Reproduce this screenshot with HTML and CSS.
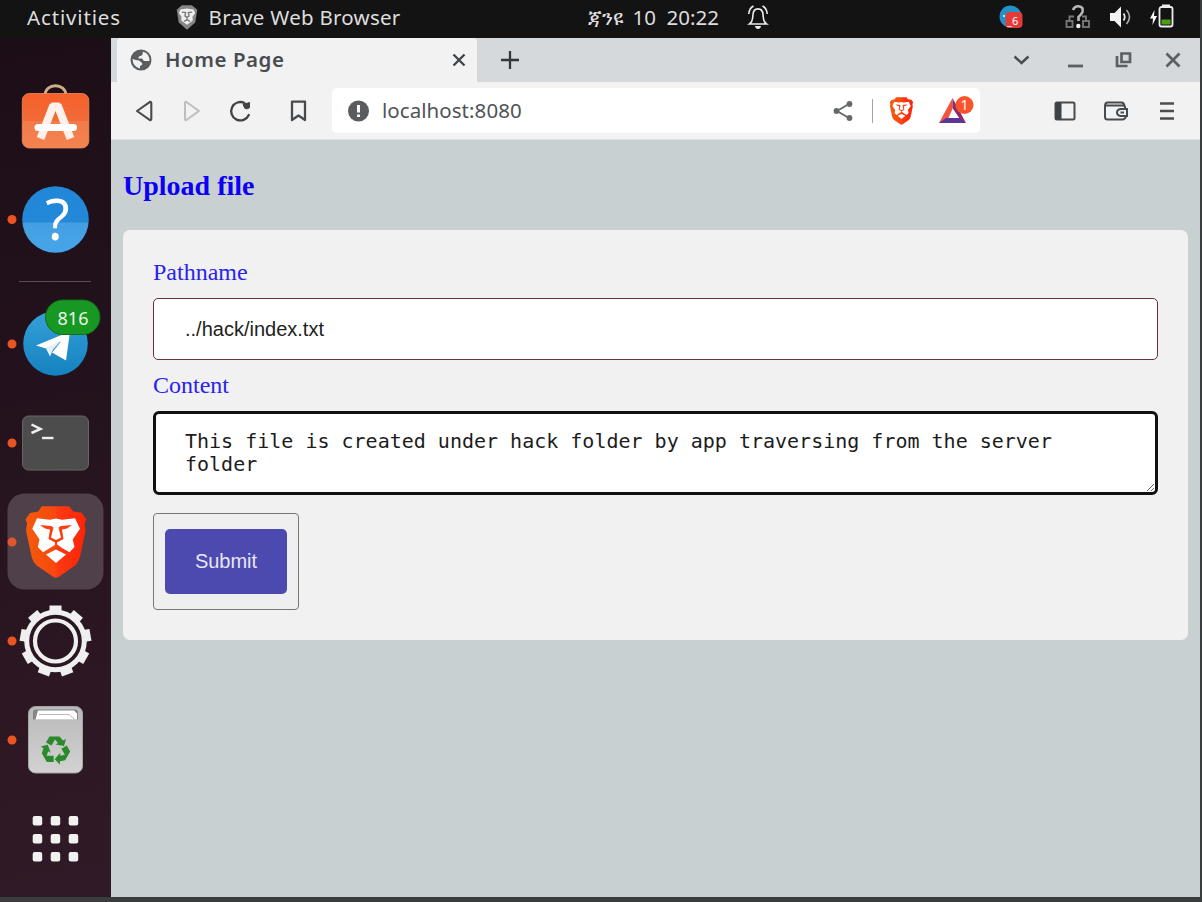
FILE: index.html
```html
<!DOCTYPE html>
<html lang="en">
<head>
<meta charset="utf-8">
<title>Home Page</title>
<link rel="stylesheet" href="styles.css">
</head>
<body>
<svg class="defs" width="0" height="0">
  <defs>
    <linearGradient id="gBag" x1="0" y1="0" x2="0" y2="1"><stop offset="0" stop-color="#f4602a"/><stop offset=".5" stop-color="#f26b38"/><stop offset=".51" stop-color="#f37b4a"/><stop offset="1" stop-color="#f3834f"/></linearGradient>
    <linearGradient id="gHelp" x1="0" y1="0" x2="0" y2="1"><stop offset="0" stop-color="#2187d8"/><stop offset=".54" stop-color="#2388d8"/><stop offset=".55" stop-color="#449fe2"/><stop offset="1" stop-color="#45a5e8"/></linearGradient>
    <linearGradient id="gTele" x1="0" y1="0" x2="0" y2="1"><stop offset="0" stop-color="#36a0d8"/><stop offset="1" stop-color="#1482c0"/></linearGradient>
    <linearGradient id="gLion" x1="0" y1="0" x2="1" y2="0"><stop offset="0" stop-color="#f35b0c"/><stop offset=".5" stop-color="#f9470f"/><stop offset=".52" stop-color="#fb3a12"/><stop offset="1" stop-color="#fb2406"/></linearGradient>
    <linearGradient id="gBin" x1="0" y1="0" x2="0" y2="1"><stop offset="0" stop-color="#b9b9b9"/><stop offset="1" stop-color="#d2d2d2"/></linearGradient>
    <symbol id="lion" viewBox="-1 0 62 73">
      <path class="mane" d="M15.700.7H43L47.300 6 55.700 7.300 60.500 14 58.500 18 59.500 25 54 51.500Q52.500 57 49 60L34 70.500Q30 74 26 70.500L10.700 60Q7 57 5.700 51.700L0 25 1 18-.5 14 4 7.500 12.300 6Z"/>
      <path fill="#fff" d="M11 12.700 24 14.300 30 13 36 14.300 49 12.700 54 23.300 46.700 34 48.500 41.500 43.500 46.700 36 42.500 30.500 38.500 24 42.500 17 46.700 11.800 41.500 13.500 34 6.300 23.300Z"/>
      <path fill="#fff" d="M20 49 30 44 40 49 30 57.500Z"/>
      <path class="brow" d="M14 19.500 25 20.500 27.500 22 25 32 30 34.500 35 32 32.500 22 35 20.500 46 19.500 41 23 36 24 37.500 33.500 31 37V41H29V37L22.500 33.500 24 24 19 23Z"/>
    </symbol>
  </defs>
</svg>

<div class="desktop">
  <header class="topbar">
    <span class="activities">Activities</span>
    <svg class="app-icon" width="22" height="25" viewBox="-1 0 62 73"><path fill="#858585" d="M15 1H44L60 14 54 51 30 72 6 51 0 14Z"/><path fill="#eee" d="M11 13 30 10 49 13 54 23 46 34 47 45 30 58 13 45 14 34 6 23Z"/><path fill="none" stroke="#777" stroke-width="4" d="M15 21 26 22 24 32 30 36 36 32 34 22 45 21M30 36V43L21 48M30 43 39 48"/></svg>
    <span class="app-name">Brave Web Browser</span>
    <span class="clock"><span class="month">ጃንዩ</span><span class="day">10</span><span>20:22</span></span>
    <svg class="bell" width="22" height="26" viewBox="0 0 22 26" fill="none" stroke="#ededed" stroke-width="1.600"><path d="M2.500 20C6 17.500 5.500 15 6 10.500 6.500 3 15.500 3 16 10.500 16.500 15 16 17.500 19.500 20ZM1.800 10Q2.300 4 6.500 2M20.200 10Q19.700 4 15.500 2"/><path d="M8 22H14Q13.500 25 11 25T8 22Z" fill="#ededed" stroke="none"/></svg>
    <svg class="tray-telegram" width="24" height="24" viewBox="0 0 24 24"><circle cx="11.500" cy="11.500" r="11" fill="#2491c8"/><circle cx="5" cy="11" r="1" fill="#fff"/><rect x="6.500" y="7" width="17" height="16" rx="4" fill="#e33c38"/><text x="8" y="20" class="tray-count">_6</text></svg>
    <svg class="network" width="26" height="26" viewBox="0 0 26 26"><g fill="none" stroke="#777" stroke-width="1.900"><rect x="1.500" y="17" width="6" height="6"/><rect x="18" y="17" width="6" height="6"/><path d="M4.500 17V12.500H9M17 12.500H21V17"/></g><path d="M8 6Q9.500 2 13.500 2.200 19 3 17.500 8 16 11 13.500 13V17" fill="none" stroke="#b9b9b9" stroke-width="2.600"/><circle cx="13.300" cy="22" r="2.200" fill="#eee"/></svg>
    <svg class="volume" width="24" height="24" viewBox="0 0 24 24"><path d="M1 8H5.500L12 1.500V22.500L5.500 16H1Z" fill="#f2f2f2"/><path d="M14.500 8.500Q17 12 14.500 15.500" fill="none" stroke="#eee" stroke-width="1.700"/><path d="M17.500 5Q23.500 12 17.500 19" fill="none" stroke="#aaa" stroke-width="1.600"/></svg>
    <svg class="battery" width="26" height="26" viewBox="0 0 26 26"><path d="M5.500 6 1 14.500H4L3.500 21 8 12H5Z" fill="#fff"/><path d="M14 3V1.500H20V3" fill="none" stroke="#eee" stroke-width="2"/><rect x="10.500" y="3" width="13" height="19.500" rx="2" fill="none" stroke="#eee" stroke-width="1.800"/><rect x="12.500" y="15.500" width="9" height="5" fill="#4da012"/></svg>
  </header>

  <div class="workspace">
    <nav class="dock">
      <svg class="dock-item" viewBox="0 -49.500 111 99"><path d="M45-25C45-38 66-38 66-25" fill="none" stroke="#cdb089" stroke-width="2.800"/><rect x="22.300" y="-27" width="66.500" height="54.500" rx="7" fill="url(#gBag)" stroke="#f58a5c" stroke-width=".8"/><g stroke="#fff0ea" fill="none"><path stroke-width="8" d="M40.500 18 53.500-15.500M70.500 18 57.500-15.500"/><path stroke="#fff" stroke-width="7" stroke-linecap="round" d="M38 7H73.500"/></g><path fill="#fff0ea" d="M49.800-14 51.500-18H59.500L61.200-14Z"/></svg>
      <svg class="dock-item" viewBox="0 -49.500 111 99"><circle cx="12" cy="0" r="4.500" fill="#e95420"/><circle cx="55.500" cy="0" r="33.300" fill="url(#gHelp)"/><text class="help-mark" x="57.500" y="20.500" text-anchor="middle">?</text></svg>
      <div class="dock-divider"></div>
      <svg class="dock-item" viewBox="0 -49.500 111 99"><circle cx="12" cy=".5" r="4.500" fill="#e95420"/><circle cx="55.500" cy="0" r="32.300" fill="url(#gTele)"/><path fill="#fff" d="M36 2 70-12 66 17 52 9 61-2 46 5Z"/><path fill="#e8f1f6" d="M46 5 62-4 53 6 50 13Z"/><rect x="45.500" y="-43.500" width="54.500" height="34.500" rx="17.200" fill="#179823" stroke="#126c1b"/><text class="badge" x="73" y="-19" text-anchor="middle">816</text></svg>
      <svg class="dock-item" viewBox="0 -49.500 111 99"><circle cx="12" cy=".5" r="4.500" fill="#e95420"/><rect x="22.500" y="-26.500" width="66" height="54" rx="6" fill="#4c4c4c" stroke="#666"/><path d="M31.500-18 40.500-13.500 31.500-9.500" fill="none" stroke="#eee" stroke-width="2.500"/><path d="M42-4.500H53.500" stroke="#eee" stroke-width="2.400"/></svg>
      <svg class="dock-item lion-color" viewBox="0 -49.500 111 99"><rect x="7.500" y="-48" width="96" height="96" rx="17" fill="#4f404a"/><circle cx="12" cy=".5" r="4.500" fill="#e0552b"/><use href="#lion" x="25" y="-36" width="62" height="73"/></svg>
      <svg class="dock-item" viewBox="0 -49.500 111 99"><circle cx="12" cy=".5" r="4.500" fill="#e95420"/><g transform="translate(55.500 .5)" fill="none" stroke="#efefef"><circle r="28.800" stroke-width="5"/><circle r="20.500" stroke-width="4.200"/><g fill="#efefef" stroke="none"><path id="tooth" d="M-6-29-6-35.500H6L6-29Z"/><use href="#tooth" transform="rotate(40)"/><use href="#tooth" transform="rotate(80)"/><use href="#tooth" transform="rotate(120)"/><use href="#tooth" transform="rotate(160)"/><use href="#tooth" transform="rotate(200)"/><use href="#tooth" transform="rotate(240)"/><use href="#tooth" transform="rotate(280)"/><use href="#tooth" transform="rotate(320)"/></g></g></svg>
      <svg class="dock-item" viewBox="0 -49.500 111 99"><circle cx="12" cy=".5" r="4.500" fill="#e95420"/><rect x="28.500" y="-33" width="54" height="66.500" rx="7" fill="url(#gBin)" stroke="#a5a5a5"/><path d="M33-20V-28Q33-30 36-30H75Q78-30 78-27V-20Z" fill="#858585"/><path d="M35.500-20 38-29H74L77-26V-20Z" fill="#fff"/><path d="M39-25H69L75-20" fill="none" stroke="#bbb"/>
        <g transform="translate(55.500 10.500)" fill="#2a8a2b"><path id="arrow" d="M-9.500-7.500-6-13.500H4L7.500-9.500 10.500-11 8.500-4 0-5.500 2.500-7-.5-10.500-4-4.500Z"/><use href="#arrow" transform="rotate(120)"/><use href="#arrow" transform="rotate(240)"/></g></svg>
      <svg class="dock-item" viewBox="0 -49.500 111 99" fill="#f1f1f1"><g id="dots"><rect x="32.700" y="-22.500" width="9.500" height="9.500" rx="2"/><rect x="50.700" y="-22.500" width="9.500" height="9.500" rx="2"/><rect x="68.700" y="-22.500" width="9.500" height="9.500" rx="2"/></g><use href="#dots" y="18"/><use href="#dots" y="36"/></svg>
    </nav>

    <main class="window">
      <div class="tabstrip">
        <div class="tab">
          <svg width="22" height="22" viewBox="0 0 22 22"><circle cx="11" cy="11" r="10.500" fill="#5b5e61"/><path fill="#f2f2f2" d="M2.500 10Q6 11 9 11.500L12 14Q13 16 10 17V19.500Q3 18 2.500 10ZM10 2.500 13 3Q13 6 10.500 7 8 7.500 8.500 9.500L12 9.500 14 12H19.500Q19.500 5 14 3Z"/></svg>
          <span class="tab-title">Home Page</span>
          <svg width="16" height="16" viewBox="0 0 16 16"><path d="M2.500 2.500 13.500 13.500M13.500 2.500 2.500 13.500" stroke="#404447" stroke-width="2.300"/></svg>
        </div>
        <svg class="new-tab" width="22" height="22" viewBox="0 0 22 22"><path d="M11 2V20M2 11H20" stroke="#33373a" stroke-width="2.300"/></svg>
        <div class="window-controls">
          <svg width="20" height="20" viewBox="0 0 20 20"><path d="M3.500 6.500 10.500 13 17.500 6.500" fill="none" stroke="#4a4e51" stroke-width="2.500"/></svg>
          <svg width="20" height="20" viewBox="0 0 20 20"><path d="M3 16H18" stroke="#5c6063" stroke-width="2.800"/></svg>
          <svg width="20" height="20" viewBox="0 0 20 20" fill="none" stroke="#5c6063" stroke-width="2.700"><path d="M8.500 3.500H17V12H8.500ZM4 6V16H14.500"/></svg>
          <svg width="20" height="20" viewBox="0 0 20 20"><path d="M3.500 3.500 16.500 16.500M16.500 3.500 3.500 16.500" stroke="#5c6063" stroke-width="2.800"/></svg>
        </div>
      </div>

      <div class="toolbar">
        <svg class="nav-button" viewBox="-24 -12 48 24"><path d="M-7 0 6-9.200Q7.300-9.500 7.300-7.500V7.500Q7.300 9.500 6 9.200Z" fill="none" stroke="#484b4e" stroke-width="2.100" stroke-linejoin="round"/></svg>
        <svg class="nav-button" viewBox="-24 -12 48 24"><path d="M7 0-6-9.200Q-7-9.500-7-7.500V7.500Q-7 9.500-6 9.200Z" fill="none" stroke="#bebebe" stroke-width="2" stroke-linejoin="round"/></svg>
        <svg class="nav-button" viewBox="-24 -12 48 24"><path d="M4.500-8A9.200 9.200 0 1 0 8.800 4" fill="none" stroke="#404346" stroke-width="2.300" stroke-linecap="round"/><path d="M3-6.500 9.500-8.500V-3.500Q8-1.500 5-2.500Z" fill="#404346" stroke="#404346" stroke-linejoin="round"/></svg>
        <svg class="nav-button bookmark" viewBox="-34 -12 68 24"><path d="M-6-9.300H7V9L.5 4.500-6 9Z" fill="none" stroke="#484b4e" stroke-width="2.300" stroke-linejoin="round"/></svg>
        <div class="address">
          <svg class="info" width="22" height="22" viewBox="0 0 22 22"><circle cx="11.500" cy="11" r="10.500" fill="#5a5d60"/><path d="M11.500 5V12.500M11.500 14.500V17" stroke="#fff" stroke-width="3"/></svg>
          <span class="url">localhost:8080</span>
          <svg class="share" viewBox="-24 -12 48 24"><path d="M6-7-6 0 6 7" fill="none" stroke="#66696c" stroke-width="1.900"/><g fill="#66696c"><circle cx="6.500" cy="-7" r="2.900"/><circle cx="-6.500" cy="0" r="2.900"/><circle cx="6.500" cy="7" r="2.900"/></g></svg>
          <span class="separator"></span>
          <svg class="shields" viewBox="-24 -15 48 30"><use href="#lion" x="-12" y="-14" width="25" height="28"/></svg>
          <svg class="rewards" viewBox="925 93 55 36"><path d="M952.500 98 939 123H946L952.500 109Z" fill="#f0543c"/><path d="M939 123H966L961 118H946Z" fill="#5c3596"/><path d="M952.500 98 966 123 959.500 118.500 952.500 108Z" fill="#8c2c6e"/><circle cx="964.500" cy="105" r="9" fill="#fb542b"/><text x="964.500" y="110" text-anchor="middle">1</text></svg>
        </div>
        <div class="tools">
          <svg viewBox="-25.500 -12 51 24"><rect x="-9" y="-8.500" width="19" height="17" rx="1.500" fill="none" stroke="#484b4e" stroke-width="2"/><rect x="-9" y="-8.500" width="6" height="17" fill="#3f4245"/></svg>
          <svg viewBox="-25.500 -12 51 24" fill="none" stroke="#484b4e" stroke-width="2"><path d="M9.500-3V-4Q9.500-5.500 7.500-5.500H-10M-10.500-5V6Q-10.500 8.500-8 8.500H7Q9.500 8.500 10.500 5.500M-10.500-5Q-10.500-8.500-8-8.500H6Q8.500-8.500 9-5"/><path d="M11.500-2H5Q1.500-1.500 1.500 1.500T5 5H11.500Z"/><path d="M5 1.500H8.500"/></svg>
          <svg viewBox="-25.500 -12 51 24"><path d="M-6.500-7.500H7.500M-6.500 0H7.500M-6.500 7.500H7.500" stroke="#4b4e51" stroke-width="2.400"/></svg>
        </div>
      </div>

      <section class="page">
        <h2>Upload file</h2>
        <form class="card">
          <label for="path">Pathname</label>
          <input id="path" type="text" value="../hack/index.txt">
          <label for="content">Content</label>
          <textarea id="content" spellcheck="false">This file is created under hack folder by app traversing from the server folder</textarea>
          <div class="submit-frame"><button type="button">Submit</button></div>
        </form>
      </section>
    </main>
  </div>
</div>
</body>
</html>
```

FILE: styles.css
```css
* { box-sizing: border-box; }

body {
  margin: 0;
  background: #393d3e;
  font-family: "Noto Sans", "Open Sans", sans-serif;
}

.defs { display: block; }

svg { flex: none; display: block; }

.desktop {
  width: 1202px;
  height: 902px;
  padding: 0 2px 5px 0;
  display: flex;
  flex-direction: column;
  overflow: hidden;
}

/* Top panel */
.topbar {
  height: 37.500px;
  flex: none;
  display: flex;
  align-items: center;
  padding: 0 25px 3px 27px;
  background: #131313;
  color: #dedede;
  font-size: 20.500px;
  white-space: nowrap;
}
.activities { width: 149px; letter-spacing: 0.850px; }
.app-icon { width: 22px; }
.app-name { width: 380px; padding-left: 11px; letter-spacing: 0.250px; }
.clock { width: 171px; padding-left: 12px; display: flex; align-items: baseline; }
.month { width: 44px; font-size: 21px; }
.day { width: 34px; }
.bell { margin-right: 230px; }
.network { margin-left: 42px; }
.volume { margin-left: 18px; }
.battery { margin-left: 16px; }
.tray-count { font-size: 11px; fill: #fff; }

/* Dock */
.workspace { flex: 1; display: flex; min-height: 0; }
.dock {
  width: 111px;
  flex: none;
  padding-top: 33.500px;
  background: linear-gradient(170deg, #1c0e17 0%, #23121d 40%, #2c1723 75%, #301a27 100%);
}
.dock-item { width: 111px; height: 99px; }
.dock-divider {
  width: 72px;
  height: 1px;
  margin: 12px 0 12px 19px;
  background: #5a4e56;
}
.help-mark { font-size: 56px; fill: #fff; }
.badge { font-size: 18px; fill: #e9f5ea; }
.mane { fill: url(#gLion); }
.brow { fill: #fa4011; }

/* Browser window */
.window {
  flex: 1;
  display: flex;
  flex-direction: column;
  min-width: 0;
  background: #c8d0d2;
}
.tabstrip {
  height: 44.500px;
  flex: none;
  display: flex;
  align-items: center;
  padding-left: 6px;
  background: #d5d9dc;
}
.tab {
  width: 360px;
  height: 44.500px;
  display: flex;
  align-items: center;
  padding: 0 10px 0 13px;
  border-radius: 4px 4px 0 0;
  background: #f2f2f2;
}
.tab-title {
  flex: 1;
  padding: 0 0 2px 13px;
  color: #484c50;
  font-size: 20.500px;
  font-weight: 600;
  letter-spacing: 0.550px;
}
.new-tab { margin-left: 22px; }
.window-controls { margin-left: auto; padding-right: 17px; display: flex; }
.window-controls svg + svg { margin-left: 28px; }
.window-controls svg:nth-child(2) { margin-left: 34px; }
.window-controls svg:nth-child(4) { margin-left: 30px; }

.toolbar {
  height: 58px;
  flex: none;
  display: flex;
  align-items: center;
  padding-left: 9px;
  background: #f2f2f2;
  border-bottom: 1px solid #dde1e2;
}
.nav-button { width: 48px; height: 24px; }
.bookmark { width: 68px; }
.address {
  width: 648px;
  height: 45px;
  display: flex;
  align-items: center;
  padding-left: 15px;
  border-radius: 5px;
  background: #fff;
}
.url {
  flex: 1;
  padding: 0 0 2px 13px;
  color: #505356;
  font-size: 20.500px;
  letter-spacing: 0.050px;
}
.share { width: 48px; height: 24px; }
.separator { width: 1px; height: 24px; margin: 0 4px 0 5px; background: #a5a5a5; }
.shields { width: 48px; height: 30px; }
.rewards { width: 55px; height: 36px; font-size: 14px; fill: #fff; }
.tools { display: flex; padding-left: 59px; }
.tools svg { width: 51px; height: 24px; }

/* Page */
.page { padding: 30px 12px 0; }
h2 {
  margin: 0 0 28px;
  color: #0b00f5;
  font: bold 28px/32px "Liberation Serif", serif;
}
.card {
  height: 410px;
  display: flex;
  flex-direction: column;
  align-items: stretch;
  padding: 27px 30px;
  border-radius: 7px;
  background: #f1f1f1;
}
label {
  color: #2a22ee;
  font: 24px/30px "Liberation Serif", serif;
}
input {
  height: 62px;
  margin: 11px 0 10px;
  padding: 0 31px;
  border: 1px solid #6a3238;
  border-radius: 5px;
  background: #fff;
  color: #222;
  font: 20px "Liberation Sans", sans-serif;
}
textarea {
  height: 84px;
  margin: 11px 0 18px;
  padding: 16px 29px;
  border: 3px solid #111;
  border-radius: 6px;
  outline: none;
  background: #fff;
  color: #1c1c1c;
  font: 20px/22.500px "DejaVu Sans Mono", monospace;
  resize: both;
  overflow: hidden;
}
.submit-frame {
  width: 145.500px;
  height: 97px;
  padding: 15px 11px;
  border: 1px solid #777;
  border-radius: 4px;
  background: #efefef;
}
button {
  display: block;
  width: 122px;
  height: 65px;
  padding: 0;
  border: 0;
  border-radius: 5px;
  background: #4c4aae;
  color: #e6e6f6;
  font: 20px "Liberation Sans", sans-serif;
}
```
